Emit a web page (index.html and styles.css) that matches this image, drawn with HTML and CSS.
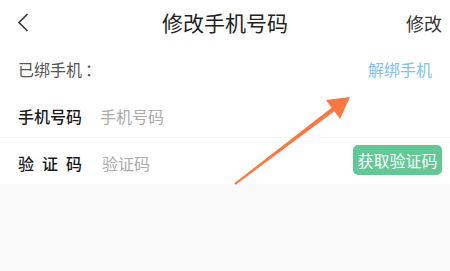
FILE: index.html
```html
<!DOCTYPE html>
<html lang="zh-CN">
<head>
<meta charset="utf-8">
<link rel="stylesheet" href="styles.css">
</head>
<body>
<div class="page">
  <header class="topbar">
    <span class="back"><svg width="12" height="19" viewBox="0 0 12 19"><path d="M10.5 1 L2 9.5 L10.5 18" fill="none" stroke="#333" stroke-width="1.6"/></svg></span>
    <h1 class="title">修改手机号码</h1>
    <span class="action">修改</span>
  </header>
  <section class="form">
    <div class="row row-bound">
      <span class="bound-label">已绑手机<span class="colon">：</span></span>
      <span class="unbind">解绑手机</span>
    </div>
    <div class="row row-phone">
      <span class="label">手机号码</span>
      <span class="placeholder">手机号码</span>
    </div>
    <div class="row row-code">
      <span class="label label-spaced">验证码</span>
      <span class="placeholder ph-code">验证码</span>
      <span class="btn-code">获取验证码</span>
    </div>
  </section>
  <svg class="arrow" width="450" height="271" viewBox="0 0 450 271">
    <polygon points="234.3,183.3 331.6,107.7 326,100 350,97 340,119 334.4,111.3 235.7,184.7" fill="#fa7841"/>
  </svg>
</div>
</body>
</html>
```
FILE: styles.css
```css
* { box-sizing: border-box; margin: 0; padding: 0; }
html, body { width: 450px; height: 271px; overflow: hidden; }
body {
  background: #f9f9f9;
  font-family: "Noto Sans CJK SC", "Noto Sans", sans-serif;
}
.page { position: relative; width: 450px; height: 271px; }
.topbar {
  height: 45px;
  background: #fff;
  display: flex;
  align-items: center;
  justify-content: space-between;
  padding: 0 8px 0 17px;
  position: relative;
}
.back { display: flex; width: 12px; height: 19px; }
.title {
  position: absolute;
  left: 0; right: 0;
  text-align: center;
  font-size: 21px;
  font-weight: 400;
  color: #222;
  line-height: 45px;
  pointer-events: none;
}
.action { font-size: 18px; color: #333; line-height: 1; }
.form { background: #fff; }
.row {
  display: flex;
  align-items: center;
  padding: 0 8px 0 18px;
}
.row-bound { height: 47px; }
.row-phone { height: 46px; border-bottom: 1px solid #f6f6f6; padding-top: 3px; }
.row-code { height: 46px; padding-top: 4px; }
.bound-label { font-size: 16px; color: #555; }
.colon { padding-left: 3px; }
.unbind { margin-left: auto; margin-right: 10px; font-size: 16px; color: #7cc3ee; }
.label { font-size: 16px; color: #1a1a1a; font-weight: 500; width: 82px; }
.label-spaced { letter-spacing: 8px; width: 84px; }
.placeholder { font-size: 16px; color: #aaa; }
.btn-code {
  margin-left: auto;
  height: 30px;
  width: 89px;
  border-radius: 5px;
  background: #63c895;
  color: #fff;
  font-size: 16px;
  display: flex;
  align-items: center;
  justify-content: center;
  margin-top: -7px;
}
.arrow { position: absolute; left: 0; top: 0; pointer-events: none; }
```
